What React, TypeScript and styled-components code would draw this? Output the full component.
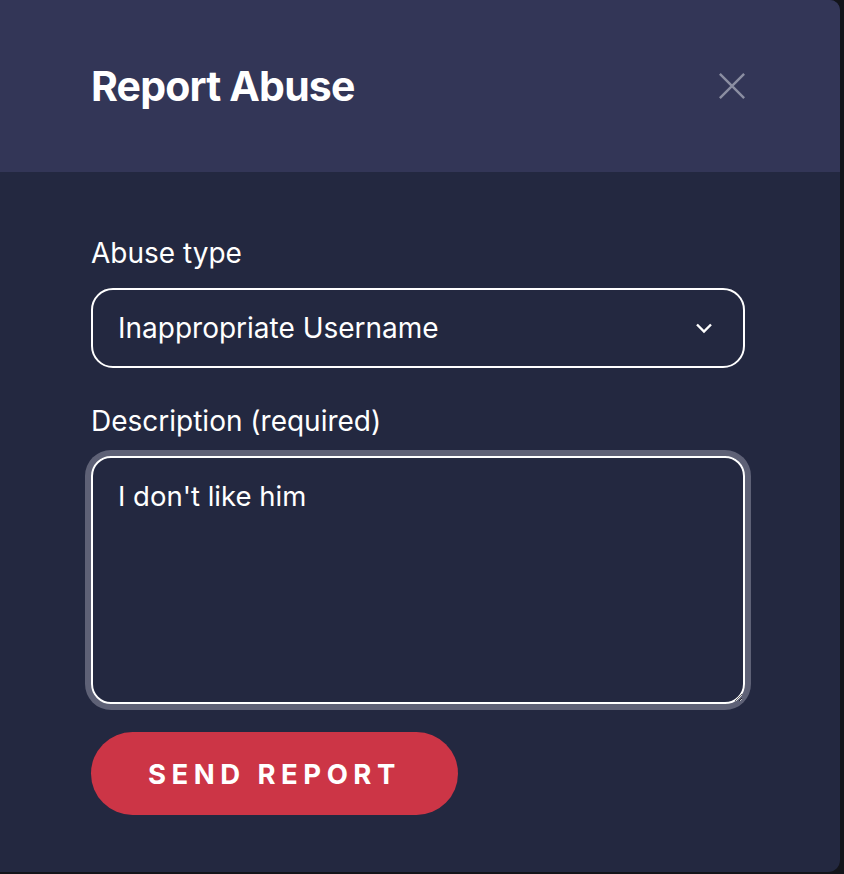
import React, { useEffect, useRef, useState } from 'react';
import styled, { createGlobalStyle } from 'styled-components';

const GlobalStyle = createGlobalStyle`
  html, body {
    margin: 0;
    padding: 0;
    background: #13141a;
    font-family: Inter, "Noto Sans", sans-serif;
  }
`;

const ABUSE_TYPES = ['Inappropriate Username', 'Harassment', 'Spam', 'Cheating', 'Other'];

export default function App() {
  const [abuseType, setAbuseType] = useState(ABUSE_TYPES[0]);
  const [description, setDescription] = useState("I don't like him");
  const textRef = useRef<HTMLTextAreaElement>(null);

  // the report form opens with the description focused, caret at the end
  useEffect(() => {
    const el = textRef.current;
    if (el) {
      el.focus();
      el.setSelectionRange(el.value.length, el.value.length);
    }
  }, []);

  return (
    <>
      <GlobalStyle />
      <Page>
        <Modal>
          <Header>
            <Title>Report Abuse</Title>
            <CloseButton aria-label="Close">
              <svg width="30" height="30" viewBox="0 0 30 30" fill="none">
                <path d="M2 2L28 28M28 2L2 28" stroke="currentColor" strokeWidth="2.6" />
              </svg>
            </CloseButton>
          </Header>
          <Body>
            <Field>
              <Label htmlFor="abuseType">Abuse type</Label>
              <SelectWrap>
                <Select id="abuseType" value={abuseType} onChange={(e) => setAbuseType(e.target.value)}>
                  {ABUSE_TYPES.map((t) => (
                    <option key={t} value={t}>{t}</option>
                  ))}
                </Select>
                <Chevron width="18" height="12" viewBox="0 0 18 12" fill="none">
                  <path d="M2 2.5L9 9.5L16 2.5" stroke="currentColor" strokeWidth="2.4" />
                </Chevron>
              </SelectWrap>
            </Field>
            <Field>
              <Label htmlFor="description">Description (required)</Label>
              <TextArea
                ref={textRef}
                id="description"
                value={description}
                onChange={(e) => setDescription(e.target.value)}
              />
            </Field>
            <SendButton type="button">Send Report</SendButton>
          </Body>
        </Modal>
      </Page>
    </>
  );
}

const Page = styled.div`
  width: 844px;
  height: 874px;
  overflow: hidden;
`;

const Modal = styled.div`
  width: 840px;
  height: 872px;
  display: flex;
  flex-direction: column;
  background: #232840;
  border-radius: 0 10px 12px 0;
  overflow: hidden;
  color: #fff;
`;

const Header = styled.div`
  height: 172px;
  flex-shrink: 0;
  display: flex;
  align-items: center;
  justify-content: space-between;
  padding: 0 95px 0 91px;
  background: #333657;
  box-sizing: border-box;
`;

const Title = styled.h2`
  margin: 0;
  font-size: 41px;
  font-weight: 700;
  letter-spacing: -0.02em;
`;

const CloseButton = styled.button`
  display: flex;
  padding: 0;
  margin-right: -1px;
  border: none;
  background: none;
  color: #8b8ea2;
  cursor: pointer;

  svg {
    width: 28px;
    height: 28px;
  }
`;

const Body = styled.div`
  display: flex;
  flex-direction: column;
  align-items: flex-start;
  padding: 65px 95px 0 91px;
`;

const Field = styled.div`
  display: flex;
  flex-direction: column;
  width: 100%;
  gap: 19px;
  margin-bottom: 37px;

  &:nth-of-type(2) {
    margin-bottom: 28px;
  }
`;

const Label = styled.label`
  font-size: 28px;
  line-height: 32px;
  font-weight: 400;
  color: #fff;
`;

const SelectWrap = styled.div`
  position: relative;
  width: 100%;
`;

const Select = styled.select`
  appearance: none;
  width: 100%;
  height: 80px;
  padding: 0 60px 0 25px;
  border: 2px solid #fff;
  border-radius: 22px;
  background: transparent;
  color: #fff;
  font-family: Inter, "Noto Sans", sans-serif;
  font-size: 28px;
  box-sizing: border-box;
  outline: none;

  option {
    color: #000;
  }
`;

const Chevron = styled.svg`
  position: absolute;
  right: 32px;
  top: 50%;
  transform: translateY(-50%);
  color: #fff;
  pointer-events: none;
`;

const TextArea = styled.textarea`
  width: 100%;
  height: 248px;
  padding: 22px 25px;
  border: 2px solid #fff;
  border-radius: 20px;
  background: transparent;
  box-shadow: 0 0 0 6px #5e6176;
  color: #fff;
  caret-color: #fff;
  font-family: Inter, "Noto Sans", sans-serif;
  font-size: 27.5px;
  line-height: 32px;
  box-sizing: border-box;
  outline: none;
  resize: vertical;
`;

const SendButton = styled.button`
  height: 83px;
  padding: 0 57px;
  border: none;
  border-radius: 42px;
  background: #cc3546;
  color: #fff;
  font-family: Inter, "Noto Sans", sans-serif;
  font-size: 27.5px;
  font-weight: 700;
  letter-spacing: 0.2em;
  text-transform: uppercase;
  cursor: pointer;
`;
